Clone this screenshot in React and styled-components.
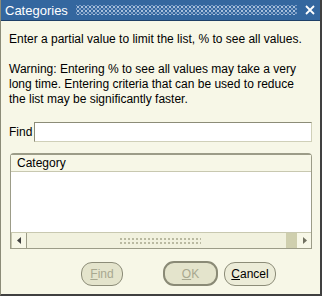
import React from "react";
import styled, { createGlobalStyle } from "styled-components";

const Global = createGlobalStyle`
  html, body { margin: 0; padding: 0; background: #f7f7e7; }
  body { font-family: "Liberation Sans", Arial, sans-serif; }
`;

const Window = styled.div`
  width: 322px;
  height: 296px;
  box-sizing: border-box;
  background: #f7f7e7;
  border-left: 1px solid #8c8c78;
  border-right: 2px solid #404040;
  border-bottom: 2px solid #404040;
  display: flex;
  flex-direction: column;
  overflow: hidden;
`;

const TitleBar = styled.div`
  height: 20px;
  background: #34679f;
  border-bottom: 1px solid #1e3f66;
  display: flex;
  align-items: center;
  padding: 0 5px 0 4px;
  gap: 8px;
  color: #fff;
  font-size: 13px;
`;

const Dots = styled.div`
  flex: 1;
  height: 10px;
  background-image: radial-gradient(circle, #a8c0dc 0.8px, transparent 1px),
    radial-gradient(circle, #7f9fc6 0.7px, transparent 1px);
  background-size: 4px 4px, 4px 4px;
  background-position: 0 0, 2px 2px;
`;

const Close = styled.svg`
  width: 10px;
  height: 10px;
`;

const Body = styled.div`
  flex: 1;
  padding: 11px 8px 0 8px;
  font-size: 12px;
  color: #000;
  display: flex;
  flex-direction: column;
`;

const Para = styled.p`
  margin: 0 0 15px 0;
  line-height: 15px;
`;

const FindRow = styled.div`
  display: flex;
  align-items: center;
  gap: 2px;
  height: 20px;
`;

const Input = styled.div`
  flex: 1;
  height: 20px;
  box-sizing: border-box;
  background: #fff;
  border: 1px solid #d0d0b8;
  border-top-color: #8c8c78;
  border-left-color: #8c8c78;
`;

const ListBox = styled.div`
  margin-top: 11px;
  margin-left: 1px;
  height: 96px;
  box-sizing: border-box;
  border: 1px solid #9c9c88;
  border-top: 2px solid #9c9c88;
  border-radius: 4px 4px 0 0;
  background: #fff;
  display: flex;
  flex-direction: column;
`;

const Header = styled.div`
  height: 16px;
  background: #f7f7e7;
  border-bottom: 1px solid #c8c8b0;
  padding-left: 6px;
  line-height: 16px;
  font-size: 12px;
`;

const ListArea = styled.div`
  flex: 1;
  background: #fff;
`;

const Scroll = styled.div`
  height: 15px;
  display: flex;
  align-items: stretch;
  background: #f1f1de;
  border-top: 1px solid #c8c8b0;
`;

const ArrowBtn = styled.div`
  width: 14px;
  display: flex;
  align-items: center;
  justify-content: center;
  background: #f7f7e7;
  border-right: ${(p) => (p.$left ? "1px solid #9c9c88" : "none")};
  border-left: ${(p) => (p.$left ? "1px solid #c8c8b0" : "none")};
`;

const Track = styled.div`
  flex: 1;
  display: flex;
  align-items: center;
  justify-content: center;
`;

const Grip = styled.div`
  width: 82px;
  height: 7px;
  background-image: radial-gradient(circle, #b8b8a0 0.7px, transparent 1px);
  background-size: 4px 4px;
  margin-left: 6px;
`;

const Thumb = styled.div`
  width: 11px;
  background: #cfcfae;
`;

const Buttons = styled.div`
  display: flex;
  align-items: center;
  margin-top: 12px;
  padding-left: 72px;
`;

const Btn = styled.div`
  height: ${(p) => (p.$default ? 25 : 24)}px;
  width: ${(p) => p.$w}px;
  margin-left: ${(p) => p.$ml || 0}px;
  box-sizing: border-box;
  border-radius: 11px;
  border: ${(p) => (p.$default ? "2px solid #8a8a76" : "1px solid #8c8c78")};
  background: ${(p) => (p.$disabled ? "#e4e4cc" : "#ececd8")};
  color: ${(p) => (p.$disabled ? "#a8a890" : "#000")};
  font-size: 12px;
  display: flex;
  align-items: center;
  justify-content: center;
  u { text-decoration: underline; }
`;

export default function App() {
  return (
    <>
      <Global />
      <Window>
        <TitleBar>
          <span>Categories</span>
          <Dots />
          <Close viewBox="0 0 10 10">
            <path d="M1 1 L9 9 M9 1 L1 9" stroke="#fff" strokeWidth="1.8" />
          </Close>
        </TitleBar>
        <Body>
          <Para>Enter a partial value to limit the list, % to see all values.</Para>
          <Para>
            Warning: Entering % to see all values may take a very long time. Entering criteria that can be
            used to reduce the list may be significantly faster.
          </Para>
          <FindRow>
            <span>Find</span>
            <Input />
          </FindRow>
          <ListBox>
            <Header>Category</Header>
            <ListArea />
            <Scroll>
              <ArrowBtn $left>
                <svg width="5" height="7" viewBox="0 0 5 7">
                  <path d="M4 0 L0 3.5 L4 7 Z" fill="#404040" />
                </svg>
              </ArrowBtn>
              <Track>
                <Grip />
              </Track>
              <Thumb />
              <ArrowBtn>
                <svg width="5" height="7" viewBox="0 0 5 7">
                  <path d="M1 0 L5 3.5 L1 7 Z" fill="#707060" />
                </svg>
              </ArrowBtn>
            </Scroll>
          </ListBox>
          <Buttons>
            <Btn $w={42} $disabled>
              <span><u>F</u>ind</span>
            </Btn>
            <Btn $w={55} $ml={40} $disabled $default>
              <span><u>O</u>K</span>
            </Btn>
            <Btn $w={52} $ml={6}>
              <span><u>C</u>ancel</span>
            </Btn>
          </Buttons>
        </Body>
      </Window>
    </>
  );
}
